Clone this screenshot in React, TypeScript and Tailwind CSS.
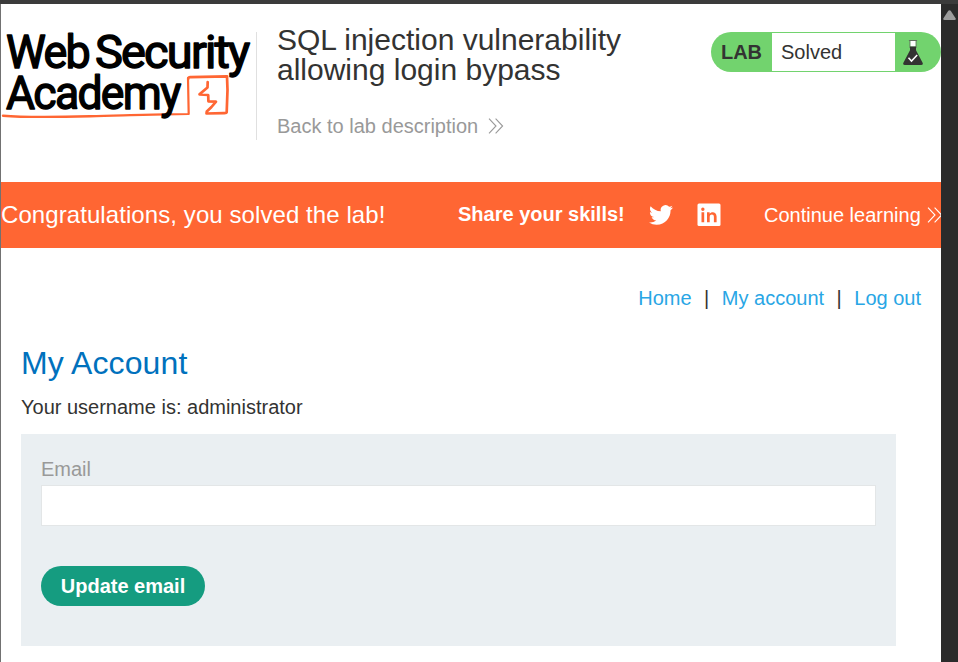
import React from "react";

function Chevrons({ className }: { className: string }) {
  return (
    <svg className={className} width="16" height="16" viewBox="0 0 16 16" fill="none" stroke="currentColor" strokeWidth="1.1">
      <path d="M1 .7 8 8 1 15.3M7.6.7l7 7.3-7 7.3" />
    </svg>
  );
}

function Logo() {
  return (
    <svg className="-mt-7 block shrink-0" width="255" height="136" viewBox="1 4 255 136">
      <g fill="none" stroke="#ff6633" strokeLinejoin="round" strokeLinecap="round">
        <path d="M3 115.700C18 117 60 117 90 116.300S145 114.500 165 114.400" strokeWidth="2.400" />
        <path d="M165 114.400 188.700 114 188 78" strokeWidth="2.200" />
        <path d="M188.300 78.500C188.500 77 189 77.200 191 77.100L227 76.400 227.500 90 226.700 112.300Q226.500 113.300 224 113.200L206.500 113.500 206.800 111.500 211.500 107 216 101.700 208.400 101.300 208.200 95 199.500 94.300 207.500 87.500 207.700 82" strokeWidth="2.700" />
      </g>
      <g fill="#000" stroke="#000" strokeWidth="1.4" strokeLinejoin="round" fontFamily="Roboto, sans-serif" fontWeight="400" fontSize="46.500" letterSpacing="-1.8">
        <text x="6" y="67.700" textLength="83" lengthAdjust="spacingAndGlyphs">Web</text>
        <text x="95" y="67.700" textLength="153.500" lengthAdjust="spacingAndGlyphs">Security</text>
        <text x="6" y="108.500" textLength="173.500" lengthAdjust="spacingAndGlyphs">Academy</text>
      </g>
    </svg>
  );
}

function Flask() {
  return (
    <svg width="20" height="26" viewBox="0 0 20 26">
      <path d="M5.900.5h8.200M7 1v7M13 1v7" stroke="#61705f" strokeWidth="1" />
      <path d="M7.500 1h5v5.500h-5z" fill="#fff" />
      <path d="M7 6.600h6v3.600l6.600 12.500q.9 2.300-1.600 2.300H2Q-.5 25 .4 22.700L7 10.200z" fill="#333332" />
      <path d="m5.500 17.800 3 3.300 5.700-6" fill="none" stroke="#fff" strokeWidth="1.500" />
    </svg>
  );
}

export default function App() {
  return (
    <div className="flex h-[662px] w-[958px] flex-col overflow-hidden bg-white font-['Liberation_Sans',Arial,sans-serif] text-xl leading-6 text-[#333332]">
      <div className="h-1 shrink-0 bg-[#3b3b3b]" />
      <div className="flex min-h-0 flex-1">
        <div className="w-px shrink-0 bg-[#717171]" />
        <main className="w-[940px] shrink-0 overflow-hidden">
          <header className="flex h-[178px] items-start pt-7">
            <Logo />
            <div className="h-[108px] w-px shrink-0 bg-[#e0e0e0]" />
            <div className="ml-5 -mt-[7px] w-[434px]">
              <h1 className="w-[370px] text-[30px] leading-[30px]">SQL injection vulnerability allowing login bypass</h1>
              <a className="mt-[29px] flex items-center whitespace-nowrap text-[#999]">
                Back to lab description
                <Chevrons className="ml-2.5" />
              </a>
            </div>
            <div className="flex h-10 w-[230px] shrink-0 overflow-hidden rounded-full bg-[#72d36e]">
              <div className="flex w-[61px] items-center justify-center font-bold">LAB</div>
              <div className="my-px flex w-[123px] items-center bg-white pl-[9px]">Solved</div>
              <div className="flex items-center pl-2 pt-0.5"><Flask /></div>
            </div>
          </header>
          <section className="flex h-[66px] items-center whitespace-nowrap bg-[#ff6633] text-white">
            <h2 className="w-[456px] shrink-0 text-2xl tracking-[0.08px]">Congratulations, you solved the lab!</h2>
            <span className="w-[192px] shrink-0 pb-0.5 pl-px font-bold">Share your skills!</span>
            <svg className="shrink-0" width="24" height="24" viewBox="0 0 24 24" fill="currentColor">
              <path d="M23.950 4.570a10 10 0 0 1-2.820.775 4.950 4.950 0 0 0 2.160-2.720c-.950.555-2 .960-3.130 1.180a4.920 4.920 0 0 0-8.390 4.480C7.690 8.090 4.070 6.130 1.640 3.160a4.820 4.820 0 0 0-.666 2.480c0 1.710.870 3.210 2.190 4.100a4.900 4.900 0 0 1-2.230-.616v.060a4.920 4.920 0 0 0 3.950 4.830 5 5 0 0 1-2.210.085 4.940 4.940 0 0 0 4.600 3.420A9.870 9.870 0 0 1 0 19.540a14 14 0 0 0 7.550 2.210c9.050 0 14-7.500 14-13.990 0-.210 0-.420-.015-.630A9.940 9.940 0 0 0 24 4.590z" />
            </svg>
            <svg className="ml-6 shrink-0" width="24" height="24" viewBox="0 0 24 24">
              <rect x=".5" y=".5" width="23" height="22.500" rx="1.500" fill="#fff" />
              <path d="M4.500 9.300h2.700v10H4.500zM5.850 4.500a1.700 1.700 0 1 1 0 3.400 1.700 1.700 0 0 1 0-3.400M10 9.300h2.600v1.400c1.400-2.400 7-2.500 7 2.900v5.700h-2.700v-5.400c0-3.300-4.200-3-4.200 0v5.400H10z" fill="#ff6633" />
            </svg>
            <a className="ml-[43px] flex shrink-0 items-center">Continue learning<Chevrons className="ml-1.5 shrink-0" /></a>
          </section>
          <nav className="flex justify-end pr-5 pt-[38px] text-[#29a6e5]">
            <a>Home</a>
            <span className="mx-[12.500px] text-[#333332]">|</span>
            <a>My account</a>
            <span className="mx-[12.500px] text-[#333332]">|</span>
            <a>Log out</a>
          </nav>
          <h2 className="ml-5 mt-[33px] text-[32px] leading-10 tracking-[0.1px] text-[#0071bd]">My Account</h2>
          <p className="ml-5 mt-3">Your username is: administrator</p>
          <form className="ml-5 mt-[15px] h-[212px] w-[875px] bg-[#eaeff2] px-5 pt-[23px]">
            <label className="block text-[#999]" htmlFor="email">Email</label>
            <input id="email" className="mt-1 block h-[41px] w-full border border-[#e3e6e7] bg-white outline-none" />
            <button type="button" className="mt-10 block h-10 w-[164px] rounded-full bg-[#159c80] font-bold text-white">Update email</button>
          </form>
        </main>
        <aside className="flex flex-1 justify-center bg-[#2b2b2b] pt-[6px]">
          <svg width="13" height="10" viewBox="0 0 13 10"><path d="M5.300.8q1.200-1.300 2.400 0l5 7.700q.5 1.500-1.200 1.500h-10Q-.2 10 .3 8.500z" fill="#9d9d9d" /></svg>
        </aside>
      </div>
    </div>
  );
}
